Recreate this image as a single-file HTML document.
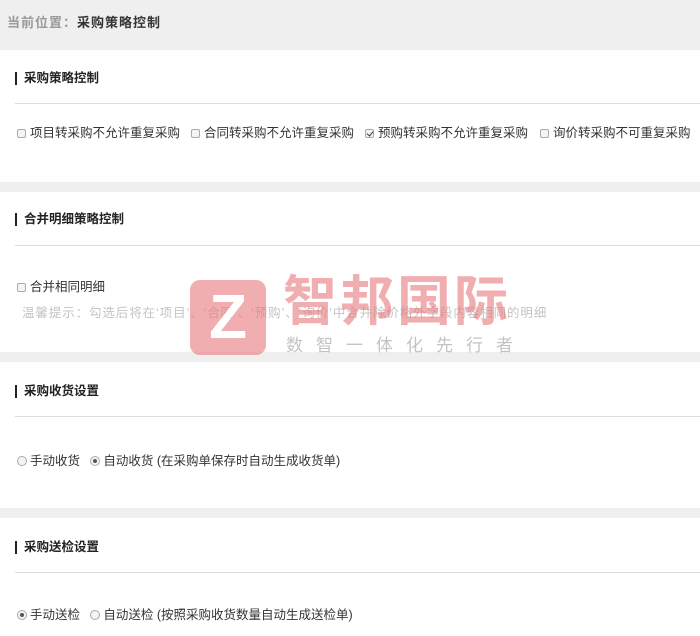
<!DOCTYPE html>
<html><head><meta charset="utf-8"><style>
*{margin:0;padding:0;box-sizing:border-box}
body{width:700px;height:636px;background:#efefef;font-family:"Liberation Sans","Noto Sans CJK SC",sans-serif;position:relative;overflow:hidden;color:#333;font-size:12.5px}
.a{position:absolute;white-space:nowrap}
.sec{position:absolute;left:0;width:700px;background:#fff}
.t{position:absolute;left:15px;font-size:12.5px;font-weight:bold;color:#222;border-left:2px solid #222;padding-left:7px;line-height:13px}
.ln{position:absolute;left:15px;right:0;height:1px;background:#ddd}
.cb{display:inline-block;width:9px;height:9px;border:1px solid #aaa;border-radius:2px;background:#f4f4f4;vertical-align:-1px;margin-right:4px;position:relative}
.cb.on::after{content:"";position:absolute;left:2px;top:0px;width:3px;height:5px;border:solid #333;border-width:0 1.5px 1.5px 0;transform:rotate(40deg)}
.rd{display:inline-block;width:10px;height:10px;border:1px solid #aaa;border-radius:50%;background:#f4f4f4;vertical-align:-1px;margin-right:3px;position:relative}
.rd.on::after{content:"";position:absolute;left:2px;top:2px;width:4px;height:4px;border-radius:50%;background:#555}
</style></head><body>
<div class="a" style="left:7px;top:12px;font-size:13px;letter-spacing:1px;color:#999;font-weight:bold">当前位置：<span style="color:#333">采购策略控制</span></div>

<div class="sec" style="top:50px;height:132px"></div>
<div class="sec" style="top:192px;height:160px"></div>
<div class="sec" style="top:362px;height:146px"></div>
<div class="sec" style="top:518px;height:118px"></div>

<div class="t" style="top:72px">采购策略控制</div>
<div class="ln" style="top:103px"></div>
<div class="a" style="left:17px;top:122px"><span class="cb"></span>项目转采购不允许重复采购</div>
<div class="a" style="left:191px;top:122px"><span class="cb"></span>合同转采购不允许重复采购</div>
<div class="a" style="left:365px;top:122px"><span class="cb on"></span>预购转采购不允许重复采购</div>
<div class="a" style="left:540px;top:122px"><span class="cb"></span>询价转采购不可重复采购</div>

<div class="t" style="top:213px">合并明细策略控制</div>
<div class="ln" style="top:245px"></div>
<div class="a" style="left:17px;top:276px"><span class="cb"></span>合并相同明细</div>
<div class="a" style="left:22px;top:302px;color:#c4c4c4;letter-spacing:0.9px">温馨提示：勾选后将在‘项目’、‘合同’、‘预购’、‘询价’中合并除价格外字段内容相同的明细</div>

<div class="t" style="top:385px">采购收货设置</div>
<div class="ln" style="top:416px"></div>
<div class="a" style="left:17px;top:450px"><span class="rd"></span>手动收货 &nbsp;&nbsp;<span class="rd on"></span>自动收货 (在采购单保存时自动生成收货单)</div>

<div class="t" style="top:541px">采购送检设置</div>
<div class="ln" style="top:572px"></div>
<div class="a" style="left:17px;top:604px"><span class="rd on"></span>手动送检 &nbsp;&nbsp;<span class="rd"></span>自动送检 (按照采购收货数量自动生成送检单)</div>

<!-- watermark -->
<div class="a" style="left:190px;top:280px;width:76px;height:75px;background:rgba(232,120,124,0.6);border-radius:10px">
<div style="position:absolute;left:10px;top:12px;width:56px;height:50px;color:#fff;font:bold 62px/52px 'Liberation Sans',sans-serif;text-align:center">Z</div></div>
<div class="a" style="left:283px;top:272px;font-size:54px;font-weight:bold;color:rgba(232,120,124,0.6);letter-spacing:3px;line-height:60px">智邦国际</div>
<div class="a" style="left:286px;top:336px;font-size:17px;color:rgba(180,180,180,0.8);letter-spacing:13px;line-height:20px">数智一体化先行者</div>
</body></html>
